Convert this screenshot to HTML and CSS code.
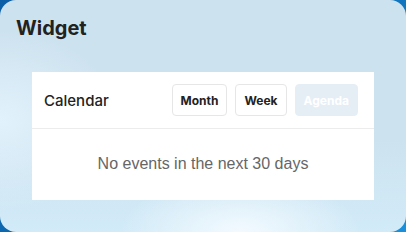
FILE: index.html
```html
<!DOCTYPE html>
<html lang="en">
  <head>
    <meta charset="UTF-8" />
    <meta name="viewport" content="width=device-width, initial-scale=1.0" />
    <title>Widget</title>
    <link rel="stylesheet" href="styles.css">
  </head>
  <body>
    <div class="widget">
      <h1>Widget</h1>
      <div class="content">
        <div class="calendar">
          <div class="header">
            <h2>Calendar</h2>
            <div class="views">
              <button>Month</button>
              <button>Week</button>
              <button class="active" disabled>Agenda</button>
            </div>
          </div>
          <div class="empty">No events in the next 30 days</div>
        </div>
      </div>
    </div>
  </body>
</html>
```

FILE: styles.css
```css
html,
body {
  margin: 0;
  padding: 0;
  height: 100%;
}
body {
  font-family: Inter, "Liberation Sans", Arial, sans-serif;
  background: linear-gradient(135deg, #0b5ea6 0%, #0b6cb4 50%, #1a8fdc 100%);
}
.widget {
  box-sizing: border-box;
  height: 100%;
  padding: 16px;
  border-radius: 16px;
  background:
    radial-gradient(ellipse 120px 55px at 240px 232px, #f3faff 0%, rgba(243, 250, 255, 0) 100%),
    radial-gradient(ellipse 120px 90px at 0px 120px, #e2f2fc 0%, rgba(226, 242, 252, 0) 100%),
    linear-gradient(180deg, #cde2ef 0%, #cde2ef 60%, #d2ebf8 100%);
}
h1 {
  margin: 0 0 16px;
  font-size: 20px;
  line-height: 24px;
  font-weight: 700;
  color: #222;
}
.content {
  padding: 16px;
}
.calendar {
  background: white;
}
.header {
  display: flex;
  justify-content: space-between;
  align-items: center;
  padding: 12px 16px 12px 12px;
  border-bottom: 1px solid #ececec;
}
h2 {
  margin: 0;
  font-size: 15px;
  font-weight: 500;
  color: #222;
}
.views {
  display: flex;
  gap: 8px;
}
.views button {
  font-family: inherit;
  height: 32px;
  padding: 0 8px;
  background: white;
  border: 1px solid #e6e6e6;
  border-radius: 4px;
  font-size: 12px;
  font-weight: 700;
  color: #222;
}
.views button.active {
  background: #e6eef5;
  border-color: #e6eef5;
  color: white;
}
.empty {
  padding: 25px 12px 27px;
  text-align: center;
  font-family: "Liberation Sans", Arial, sans-serif;
  font-size: 16px;
  line-height: 19px;
  color: #666;
}
```
